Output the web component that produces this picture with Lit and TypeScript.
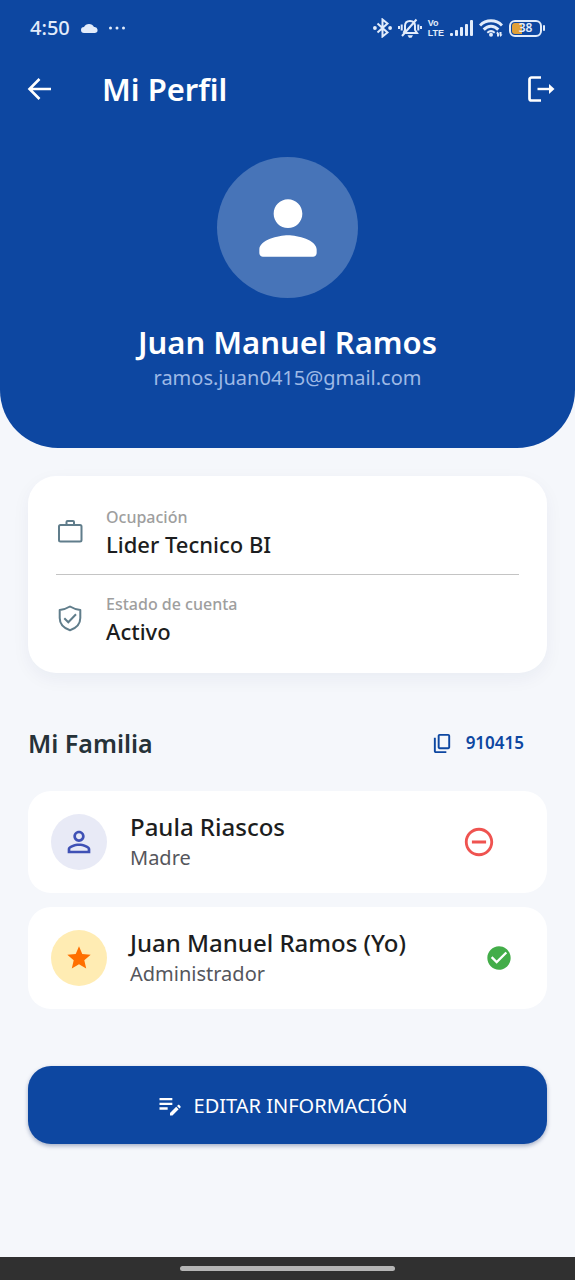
import { LitElement, html, css } from "lit";
import { customElement } from "lit/decorators.js";

const icon = (path: string) => html`<svg viewBox="0 0 24 24" aria-hidden="true"><path d=${path} /></svg>`;

const icons = {
  person: "M12 12c2.21 0 4-1.79 4-4s-1.79-4-4-4-4 1.79-4 4 1.79 4 4 4zm0 2c-2.67 0-8 1.34-8 4v1c0 .55.45 1 1 1h14c.55 0 1-.45 1-1v-1c0-2.66-5.33-4-8-4z",
  personOutline: "M12 5.9c1.16 0 2.1.94 2.1 2.1s-.94 2.1-2.1 2.1S9.9 9.16 9.9 8s.94-2.1 2.1-2.1m0 9c2.97 0 6.1 1.46 6.1 2.1v1.1H5.9V17c0-.64 3.13-2.1 6.1-2.1M12 4C9.79 4 8 5.79 8 8s1.79 4 4 4 4-1.79 4-4-1.79-4-4-4zm0 9c-2.67 0-8 1.34-8 4v3h16v-3c0-2.66-5.33-4-8-4z",
  star: "M12 17.27L18.18 21l-1.64-7.03L22 9.24l-7.19-.61L12 2 9.19 8.63 2 9.24l5.46 4.73L5.82 21z",
  copy: "M16 20H5V6H3v14c0 1.1.9 2 2 2h11v-2zM20 16V4c0-1.1-.9-2-2-2H9c-1.1 0-2 .9-2 2v12c0 1.1.9 2 2 2h9c1.1 0 2-.9 2-2zm-2 0H9V4h9v12z",
  remove: "M7 11v2h10v-2H7zm5-9C6.48 2 2 6.48 2 12s4.48 10 10 10 10-4.48 10-10S17.52 2 12 2zm0 18c-4.41 0-8-3.59-8-8s3.59-8 8-8 8 3.59 8 8-3.59 8-8 8z",
  check: "M12 2C6.48 2 2 6.48 2 12s4.48 10 10 10 10-4.48 10-10S17.52 2 12 2zm-2 15l-5-5 1.41-1.41L10 14.17l7.59-7.59L19 8l-9 9z",
  edit: "M3 10h11v2H3v-2zm0-4v2h11V6H3zm0 10h7v-2H3v2zm15.01-3.13.71-.71c.39-.39 1.02-.39 1.41 0l.71.71c.39.39.39 1.02 0 1.41l-.71.71-2.12-2.12zm-.71.71-5.3 5.3V21h2.12l5.3-5.3-2.12-2.12z",
};

const back = html`<svg class="outline" viewBox="0 0 28 28" aria-hidden="true" stroke-width="2.6">
  <path d="M25 14H4M13.500 4L3.500 14l10 10" />
</svg>`;

const work = html`<svg class="outline" viewBox="0 0 28 28" aria-hidden="true" stroke-width="2">
  <rect x="3" y="8" width="22.500" height="16.500" rx="1.500" />
  <path d="M10.500 8V5a1 1 0 0 1 1-1h5.500a1 1 0 0 1 1 1v3" />
</svg>`;

const shield = html`<svg class="outline" viewBox="0 0 28 28" aria-hidden="true" stroke-width="2" stroke-linejoin="round">
  <path d="M14 2.500c3.500 2.200 6.500 3 10.300 3.500v8c0 6-4.300 10.200-10.300 12.200C8 24.200 3.700 20 3.700 14V6c3.800-.5 6.800-1.300 10.300-3.500z" />
  <path d="M8.300 14.300l4 4 7.700-8" stroke-linejoin="miter" />
</svg>`;

const logout = html`<svg class="outline" viewBox="0 0 28 28" aria-hidden="true" stroke-width="2.7">
  <path d="M14 2.500H4.500a2 2 0 0 0-2 2v19a2 2 0 0 0 2 2H14" />
  <path d="M10.500 14h13" stroke-width="2.4" />
  <path d="M22 9l5.500 5-5.500 5z" fill="currentColor" stroke="none" />
</svg>`;

@customElement("status-bar")
class StatusBar extends LitElement {
  static styles = css`
    :host { display: flex; justify-content: space-between; align-items: center; height: 56px; padding: 0 30px; color: #e2ecfb; }
    .side { display: flex; align-items: center; }
    .left { gap: 11px; }
    .right { gap: 6px; }
    .time { font-size: 20px; line-height: 28px; font-weight: 500; }
    svg { display: block; fill: currentColor; }
    .line { fill: none; stroke: currentColor; stroke-width: 2; }
    .arc { fill: none; stroke: currentColor; stroke-width: 3; }
    .volte { display: flex; flex-direction: column; font-family: "Liberation Sans", sans-serif; font-size: 9px; line-height: 10px; font-weight: 700; }
    .battery { display: flex; align-items: center; gap: 1px; }
    .cell { box-sizing: border-box; width: 33px; height: 17px; border: 2px solid currentColor; border-radius: 6px; display: flex; align-items: center; justify-content: center; font-size: 12px; line-height: 12px; font-weight: 600; background: linear-gradient(90deg, #e0a037 38%, transparent 38%) content-box; padding: 1px; }
    .tip { width: 2px; height: 6px; border-radius: 1px; background: currentColor; }
  `;
  render() {
    return html`
      <div class="side left">
        <span class="time">4:50</span>
        <svg width="17" height="10" viewBox="0 0 17 10"><path d="M3 10a3 3 0 0 1 0-6A5.500 5 0 0 1 13 4a3 3 0 0 1 1 6z" /></svg>
        <svg width="16" height="4" viewBox="0 0 16 4"><circle cx="1.500" cy="2" r="1.500" /><circle cx="8" cy="2" r="1.500" /><circle cx="14.500" cy="2" r="1.500" /></svg>
      </div>
      <div class="side right">
        <svg width="19" height="20" viewBox="0 0 19 20"><path class="line" d="M4.500 5.500l10 9-5 4V1.500l5 4-10 9" /><circle cx="1.900" cy="10" r="1.900" /><circle cx="17.100" cy="10" r="1.900" /></svg>
        <svg width="24" height="20" viewBox="0 0 24 20"><path class="line" d="M7.500 15H19l-2-3V8c0-3-2-5-5-5S7 5 7 8v4l-1.500 3M4 18L18.500 1.500" /><path class="line" d="M3.700 6.500v6M20.300 6.500v6M1 8v3M23 8v3" /><path d="M9.500 17.300h5.500l-1.500 2.500h-2.500z" /></svg>
        <span class="volte"><span>Vo</span><span>LTE</span></span>
        <svg width="23" height="16" viewBox="0 0 23 16"><rect y="13" width="3" height="3" rx="1" /><rect x="5" y="10" width="3" height="6" rx="1" /><rect x="10" y="7" width="3" height="9" rx="1" /><rect x="15" y="4" width="3" height="12" rx="1" /><rect x="20" width="3" height="16" rx="1" /></svg>
        <svg width="24" height="18" viewBox="0 0 24 18"><path class="arc" d="M1 6.500C7 .3 17 .3 23 6.500M4.700 10.600c4.400-4.600 10.200-4.600 14.600 0" /><path class="line" d="M8.300 13.700c2.400-2 5-2 7.400 0" /><circle cx="12" cy="15.800" r="2" /><path d="M17 14.500l1.500-2 1.500 2v3h-2v-3zM20.500 13h2v2.500h1l-2 2.500-1-2z" /></svg>
        <span class="battery"><span class="cell">38</span><span class="tip"></span></span>
      </div>
    `;
  }
}

@customElement("app-root")
class AppRoot extends LitElement {
  static styles = css`
    :host { display: flex; flex-direction: column; min-height: 100vh; background: #f5f7fb; color: #1c1d20; font-family: "Noto Sans", "Open Sans", sans-serif; }
    * { box-sizing: border-box; }
    h1, h2, h3, p, dl, dt, dd, ul { margin: 0; padding: 0; }
    ul { list-style: none; }
    svg { display: block; width: 28px; height: 28px; fill: currentColor; }
    svg.outline { fill: none; stroke: currentColor; }
    button { display: flex; align-items: center; border: 0; padding: 0; background: none; color: inherit; font: inherit; cursor: pointer; }
    .head { background: #0d47a1; color: #fff; border-radius: 0 0 58px 58px; padding-bottom: 54px; }
    .bar { display: flex; align-items: center; height: 66px; padding: 0 20px 0 26px; }
    .bar h1 { flex: 1; margin-left: 48px; font-size: 31px; line-height: 40px; font-weight: 600; }
    .profile { display: flex; flex-direction: column; align-items: center; padding-top: 35px; }
    .photo { display: grid; place-items: center; width: 141px; height: 141px; border-radius: 50%; background: #4774b8; }
    .photo svg { width: 86px; height: 86px; }
    .profile h2 { margin-top: 24px; font-size: 31px; line-height: 40px; font-weight: 600; }
    .profile p { font-size: 20px; line-height: 32px; color: #9db9e6; }
    .body { flex: 1; padding: 28px; }
    .info { background: #fff; border-radius: 28px; padding: 28px; box-shadow: 0 6px 18px rgba(20, 40, 90, 0.05); }
    .row { display: flex; align-items: center; gap: 22px; }
    .row svg { color: #607d8b; }
    .row + .row { border-top: 1px solid #c4c4c4; margin-top: 16px; padding-top: 16px; }
    .row dt { font-size: 16px; line-height: 26px; font-weight: 500; color: #9e9e9e; }
    .row dd { font-size: 22px; line-height: 28px; font-weight: 500; }
    .title { display: flex; align-items: center; justify-content: space-between; height: 56px; margin: 42px 0 20px; padding-right: 23px; }
    .title h2 { font-size: 25px; line-height: 32px; font-weight: 600; color: #263238; }
    .code { gap: 12px; color: #0d47a1; font-size: 17px; line-height: 24px; font-weight: 600; }
    .code svg { width: 23px; height: 23px; }
    .members { display: grid; gap: 14px; }
    .member { display: flex; align-items: center; height: 102px; padding: 0 34px 0 23px; border-radius: 23px; background: #fff; }
    .badge { display: grid; place-items: center; width: 56px; height: 56px; border-radius: 50%; background: #e8eaf6; color: #3f51b5; }
    .badge svg { width: 34px; height: 34px; }
    .badge.admin { background: #ffecb3; color: #ff6f00; }
    .badge.admin svg { width: 28px; height: 28px; }
    .who { flex: 1; margin-left: 23px; }
    .who h3 { font-size: 24px; line-height: 32px; font-weight: 500; }
    .who p { font-size: 20px; line-height: 30px; color: #55565c; }
    .remove { padding: 17px; color: #ef5350; }
    .remove svg { width: 34px; height: 34px; }
    .ok { color: #43ad49; }
    .edit { width: 100%; height: 78px; margin-top: 57px; padding-right: 12px; justify-content: center; gap: 10px; border-radius: 23px; background: #0d47a1; color: #fff; font-size: 20px; box-shadow: 0 2px 4px rgba(13, 40, 100, 0.35); }
    .nav { display: grid; place-items: center; height: 23px; background: #303030; }
    .pill { width: 37.5%; height: 5px; border-radius: 3px; background: #b5b5b5; }
  `;
  render() {
    return html`
      <header class="head">
        <status-bar></status-bar>
        <div class="bar">
          <button aria-label="Volver">${back}</button>
          <h1>Mi Perfil</h1>
          <button aria-label="Cerrar sesión">${logout}</button>
        </div>
        <div class="profile">
          <div class="photo">${icon(icons.person)}</div>
          <h2>Juan Manuel Ramos</h2>
          <p>ramos.juan0415@gmail.com</p>
        </div>
      </header>
      <main class="body">
        <dl class="info">
          <div class="row">${work}<div><dt>Ocupación</dt><dd>Lider Tecnico BI</dd></div></div>
          <div class="row">${shield}<div><dt>Estado de cuenta</dt><dd>Activo</dd></div></div>
        </dl>
        <div class="title">
          <h2>Mi Familia</h2>
          <button class="code">${icon(icons.copy)}<span>910415</span></button>
        </div>
        <ul class="members">
          <li class="member">
            <div class="badge">${icon(icons.personOutline)}</div>
            <div class="who"><h3>Paula Riascos</h3><p>Madre</p></div>
            <button class="remove" aria-label="Quitar">${icon(icons.remove)}</button>
          </li>
          <li class="member">
            <div class="badge admin">${icon(icons.star)}</div>
            <div class="who"><h3>Juan Manuel Ramos (Yo)</h3><p>Administrador</p></div>
            <div class="ok">${icon(icons.check)}</div>
          </li>
        </ul>
        <button class="edit">${icon(icons.edit)}<span>EDITAR INFORMACIÓN</span></button>
      </main>
      <footer class="nav"><div class="pill"></div></footer>
    `;
  }
}
